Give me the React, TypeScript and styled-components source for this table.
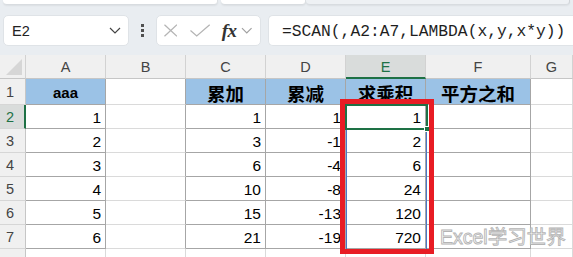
import React from 'react';
import styled, { createGlobalStyle } from 'styled-components';

const GlobalStyle = createGlobalStyle`
  html, body { margin: 0; padding: 0; }
  body { background: #e9edf1; font-family: "Liberation Sans", Arial, sans-serif; }
`;

const Page = styled.div`
  width: 573px;
  height: 257px;
  overflow: hidden;
  background: #e9edf1;
  display: flex;
  flex-direction: column;
`;

const TopStrip = styled.div`
  height: 5px;
  display: flex;
  flex-shrink: 0;
`;

const RibbonPanel = styled.div<{ $w: number; $light?: boolean }>`
  width: ${(p) => p.$w}px;
  height: 100%;
  box-sizing: border-box;
  background: ${(p) => (p.$light ? '#eef1f4' : '#ffffff')};
  border-bottom: 1px solid #d8dce0;
  border-right: 1px solid ${(p) => (p.$light ? '#d0d4d8' : '#dde0e3')};
  border-radius: 0 0 4px 4px;
  box-shadow: 0 1px 2px rgba(0, 0, 0, 0.06);
  margin-left: ${(p) => (p.$light ? 0 : 3)}px;
`;

const FormulaBar = styled.div`
  margin-top: 10px;
  height: 31px;
  display: flex;
  align-items: stretch;
  padding-left: 3px;
  flex-shrink: 0;
`;

const Box = styled.div<{ $w?: number }>`
  background: #ffffff;
  border: 1px solid #dfe3e7;
  border-radius: 5px;
  box-sizing: border-box;
  display: flex;
  align-items: center;
  ${(p) => (p.$w ? `width: ${p.$w}px;` : 'flex: 1;')}
`;

const NameText = styled.span`
  font-size: 14.5px;
  color: #222;
  padding-left: 8px;
  flex: 1;
  padding-top: 1px;
`;

const Chevron = styled.svg<{ $c: string }>`
  width: 12px;
  height: 7px;
  margin-right: 7px;
  fill: none;
  stroke: ${(p) => p.$c};
  stroke-width: 1.2;
`;

const Dots = styled.div`
  width: 27px;
  display: flex;
  flex-direction: column;
  align-items: center;
  justify-content: center;
  gap: 2px;
`;

const Dot = styled.span`
  width: 3px;
  height: 3px;
  background: #505050;
`;

const FxBox = styled(Box)`
  margin-right: 7px;
  padding-left: 7px;
`;

const FxIcon = styled.svg`
  fill: none;
  stroke: #b4b4b4;
  stroke-width: 1.3;
`;

const FxText = styled.span`
  font-family: "Liberation Serif", "Times New Roman", serif;
  font-style: italic;
  font-weight: bold;
  font-size: 19px;
  color: #333;
  margin-left: 11px;
  margin-right: 5px;
  letter-spacing: -0.5px;
`;

const FormulaBox = styled(Box)`
  border-radius: 5px 0 0 5px;
  border-right: none;
  margin-right: -10px;
`;

const FormulaText = styled.span`
  font-family: "Liberation Mono", "Courier New", monospace;
  font-size: 16.3px;
  color: #1e1e1e;
  padding-left: 13px;
  white-space: nowrap;
  padding-top: 1px;
`;

const SheetWrap = styled.div`
  position: relative;
  margin-top: 9px;
  flex: 1;
  background: #ffffff;
`;

const Sheet = styled.div`
  display: grid;
  grid-template-columns: 26px 80px 80px 80px 80px 80px 105px 1fr;
  grid-template-rows: 24px 26px repeat(7, 24px);
`;

const Corner = styled.div`
  background: #f0f0f0;
  border-right: 1px solid #d2d2d2;
  border-bottom: 1px solid #c6c6c6;
  box-sizing: border-box;
  position: relative;
  &::after {
    content: '';
    position: absolute;
    right: 3px;
    bottom: 3px;
    width: 0;
    height: 0;
    border-left: 16px solid transparent;
    border-bottom: 16px solid #d6d6d6;
  }
`;

const ColHead = styled.div<{ $sel?: boolean }>`
  background: ${(p) => (p.$sel ? '#d9dcdb' : '#f0f0f0')};
  color: ${(p) => (p.$sel ? '#1e7145' : '#444')};
  border-right: 1px solid #d2d2d2;
  border-bottom: ${(p) => (p.$sel ? '2px solid #1e7145' : '1px solid #c6c6c6')};
  box-sizing: border-box;
  display: flex;
  align-items: center;
  justify-content: center;
  font-size: 14.5px;
  padding-top: 1px;
`;

const RowHead = styled.div<{ $sel?: boolean }>`
  background: ${(p) => (p.$sel ? '#d9dcdb' : '#f0f0f0')};
  color: ${(p) => (p.$sel ? '#1e7145' : '#444')};
  border-right: ${(p) => (p.$sel ? '2px solid #1e7145' : '1px solid #c6c6c6')};
  border-bottom: 1px solid #d6d6d6;
  box-sizing: border-box;
  display: flex;
  align-items: center;
  padding-left: 6px;
  font-size: 14.5px;
  padding-top: 1px;
`;

const Cell = styled.div<{ $fill?: boolean; $right: string; $bottom: string; $head?: boolean; $cjk?: boolean }>`
  background: ${(p) => (p.$fill ? '#9bc2e6' : '#ffffff')};
  border-right: 1px solid ${(p) => p.$right};
  border-bottom: 1px solid ${(p) => p.$bottom};
  box-sizing: border-box;
  display: flex;
  align-items: center;
  justify-content: ${(p) => (p.$head ? 'center' : 'flex-end')};
  padding-right: ${(p) => (p.$head ? 0 : 4)}px;
  padding-top: 2px;
  font-family: ${(p) =>
    p.$cjk
      ? '"Noto Sans CJK SC", "Liberation Sans", sans-serif'
      : '"Liberation Sans", Arial, sans-serif'};
  font-size: ${(p) => (p.$cjk ? 18.5 : p.$head ? 15 : 15.5)}px;
  font-weight: ${(p) => (p.$head ? 'bold' : 'normal')};
  color: #000;
  white-space: nowrap;
  overflow: hidden;
`;

const Selection = styled.div`
  position: absolute;
  left: 345px;
  top: 49px;
  width: 83px;
  height: 26px;
  border: 2px solid #1e7145;
  box-sizing: border-box;
`;

const FillHandle = styled.div`
  position: absolute;
  left: 424px;
  top: 71px;
  width: 6px;
  height: 6px;
  background: #1e7145;
  border: 1px solid #fff;
  box-sizing: border-box;
`;

const Spill = styled.div`
  position: absolute;
  left: 346px;
  top: 50px;
  width: 81px;
  height: 145px;
  border: 1px solid #4a76c8;
  box-sizing: border-box;
`;

const RedBox = styled.div`
  position: absolute;
  left: 340px;
  top: 44px;
  width: 94px;
  height: 155px;
  border: 5px solid #e81c24;
  box-sizing: border-box;
`;

const Watermark = styled.div`
  position: absolute;
  left: 440px;
  top: 170px;
  line-height: 24px;
  font-family: "Liberation Sans", "Noto Sans CJK SC", sans-serif;
  font-size: 19.5px;
  color: #ffffff;
  -webkit-text-stroke: 0.9px #b4b4b4;
  white-space: nowrap;
`;

const cols = ['A', 'B', 'C', 'D', 'E', 'F', 'G'];
const headerRow = ['aaa', '', '累加', '累减', '求乘积', '平方之和', ''];
const dataRows: (number | '')[][] = [
  [1, '', 1, 1, 1, ''],
  [2, '', 3, -1, 2, ''],
  [3, '', 6, -4, 6, ''],
  [4, '', 10, -8, 24, ''],
  [5, '', 15, -13, 120, ''],
  [6, '', 21, -19, 720, ''],
];

const DARK = '#a6a6a6';
const LIGHT = '#dadada';

function borderFor(ci: number, rowIdx: number) {
  // ci: 0..6 (A..G); rowIdx: 1..8
  const bordered = rowIdx <= 7 && ci !== 1 && ci !== 6;
  const right = ci <= 5 && rowIdx <= 7 ? DARK : LIGHT;
  const bottom = bordered ? DARK : LIGHT;
  return { right, bottom };
}

export default function App() {
  return (
    <Page>
      <GlobalStyle />
      <TopStrip>
        <RibbonPanel $w={215} />
        <RibbonPanel $w={85} />
        <RibbonPanel $w={264} $light />
      </TopStrip>
      <FormulaBar>
        <Box $w={126}>
          <NameText>E2</NameText>
          <Chevron $c="#444" viewBox="0 0 12 7">
            <polyline points="1,1 6,6 11,1" />
          </Chevron>
        </Box>
        <Dots>
          <Dot />
          <Dot />
          <Dot />
        </Dots>
        <FxBox $w={105}>
          <FxIcon width="14" height="13" viewBox="0 0 14 13">
            <line x1="0.5" y1="0.5" x2="13.5" y2="12.5" />
            <line x1="13.5" y1="0.5" x2="0.5" y2="12.5" />
          </FxIcon>
          <FxIcon width="21" height="13" viewBox="0 0 21 13" style={{ marginLeft: 13 }}>
            <polyline points="0.5,6.5 7,12.2 20.5,0.5" />
          </FxIcon>
          <FxText>fx</FxText>
          <Chevron $c="#a0a0a0" viewBox="0 0 12 7">
            <polyline points="1,1 6,6 11,1" />
          </Chevron>
        </FxBox>
        <FormulaBox>
          <FormulaText>=SCAN(,A2:A7,LAMBDA(x,y,x*y))</FormulaText>
        </FormulaBox>
      </FormulaBar>
      <SheetWrap>
        <Sheet>
          <Corner />
          {cols.map((c) => (
            <ColHead key={c} $sel={c === 'E'}>
              {c}
            </ColHead>
          ))}
          <RowHead>1</RowHead>
          {headerRow.map((t, ci) => {
            const b = borderFor(ci, 1);
            const filled = ci !== 1 && ci !== 6;
            return (
              <Cell key={ci} $fill={filled} $head $cjk={ci >= 2} $right={b.right} $bottom={b.bottom}>
                {t}
              </Cell>
            );
          })}
          {dataRows.map((row, ri) => (
            <React.Fragment key={ri}>
              <RowHead $sel={ri === 0}>{ri + 2}</RowHead>
              {[...row, ''].map((v, ci) => {
                const b = borderFor(ci, ri + 2);
                return (
                  <Cell key={ci} $right={b.right} $bottom={b.bottom}>
                    {v}
                  </Cell>
                );
              })}
            </React.Fragment>
          ))}
          <RowHead />
          {cols.map((c, ci) => {
            const b = borderFor(ci, 8);
            return <Cell key={c} $right={b.right} $bottom={b.bottom} />;
          })}
        </Sheet>
        <Spill />
        <Selection />
        <FillHandle />
        <RedBox />
        <Watermark>Excel学习世界</Watermark>
      </SheetWrap>
    </Page>
  );
}
